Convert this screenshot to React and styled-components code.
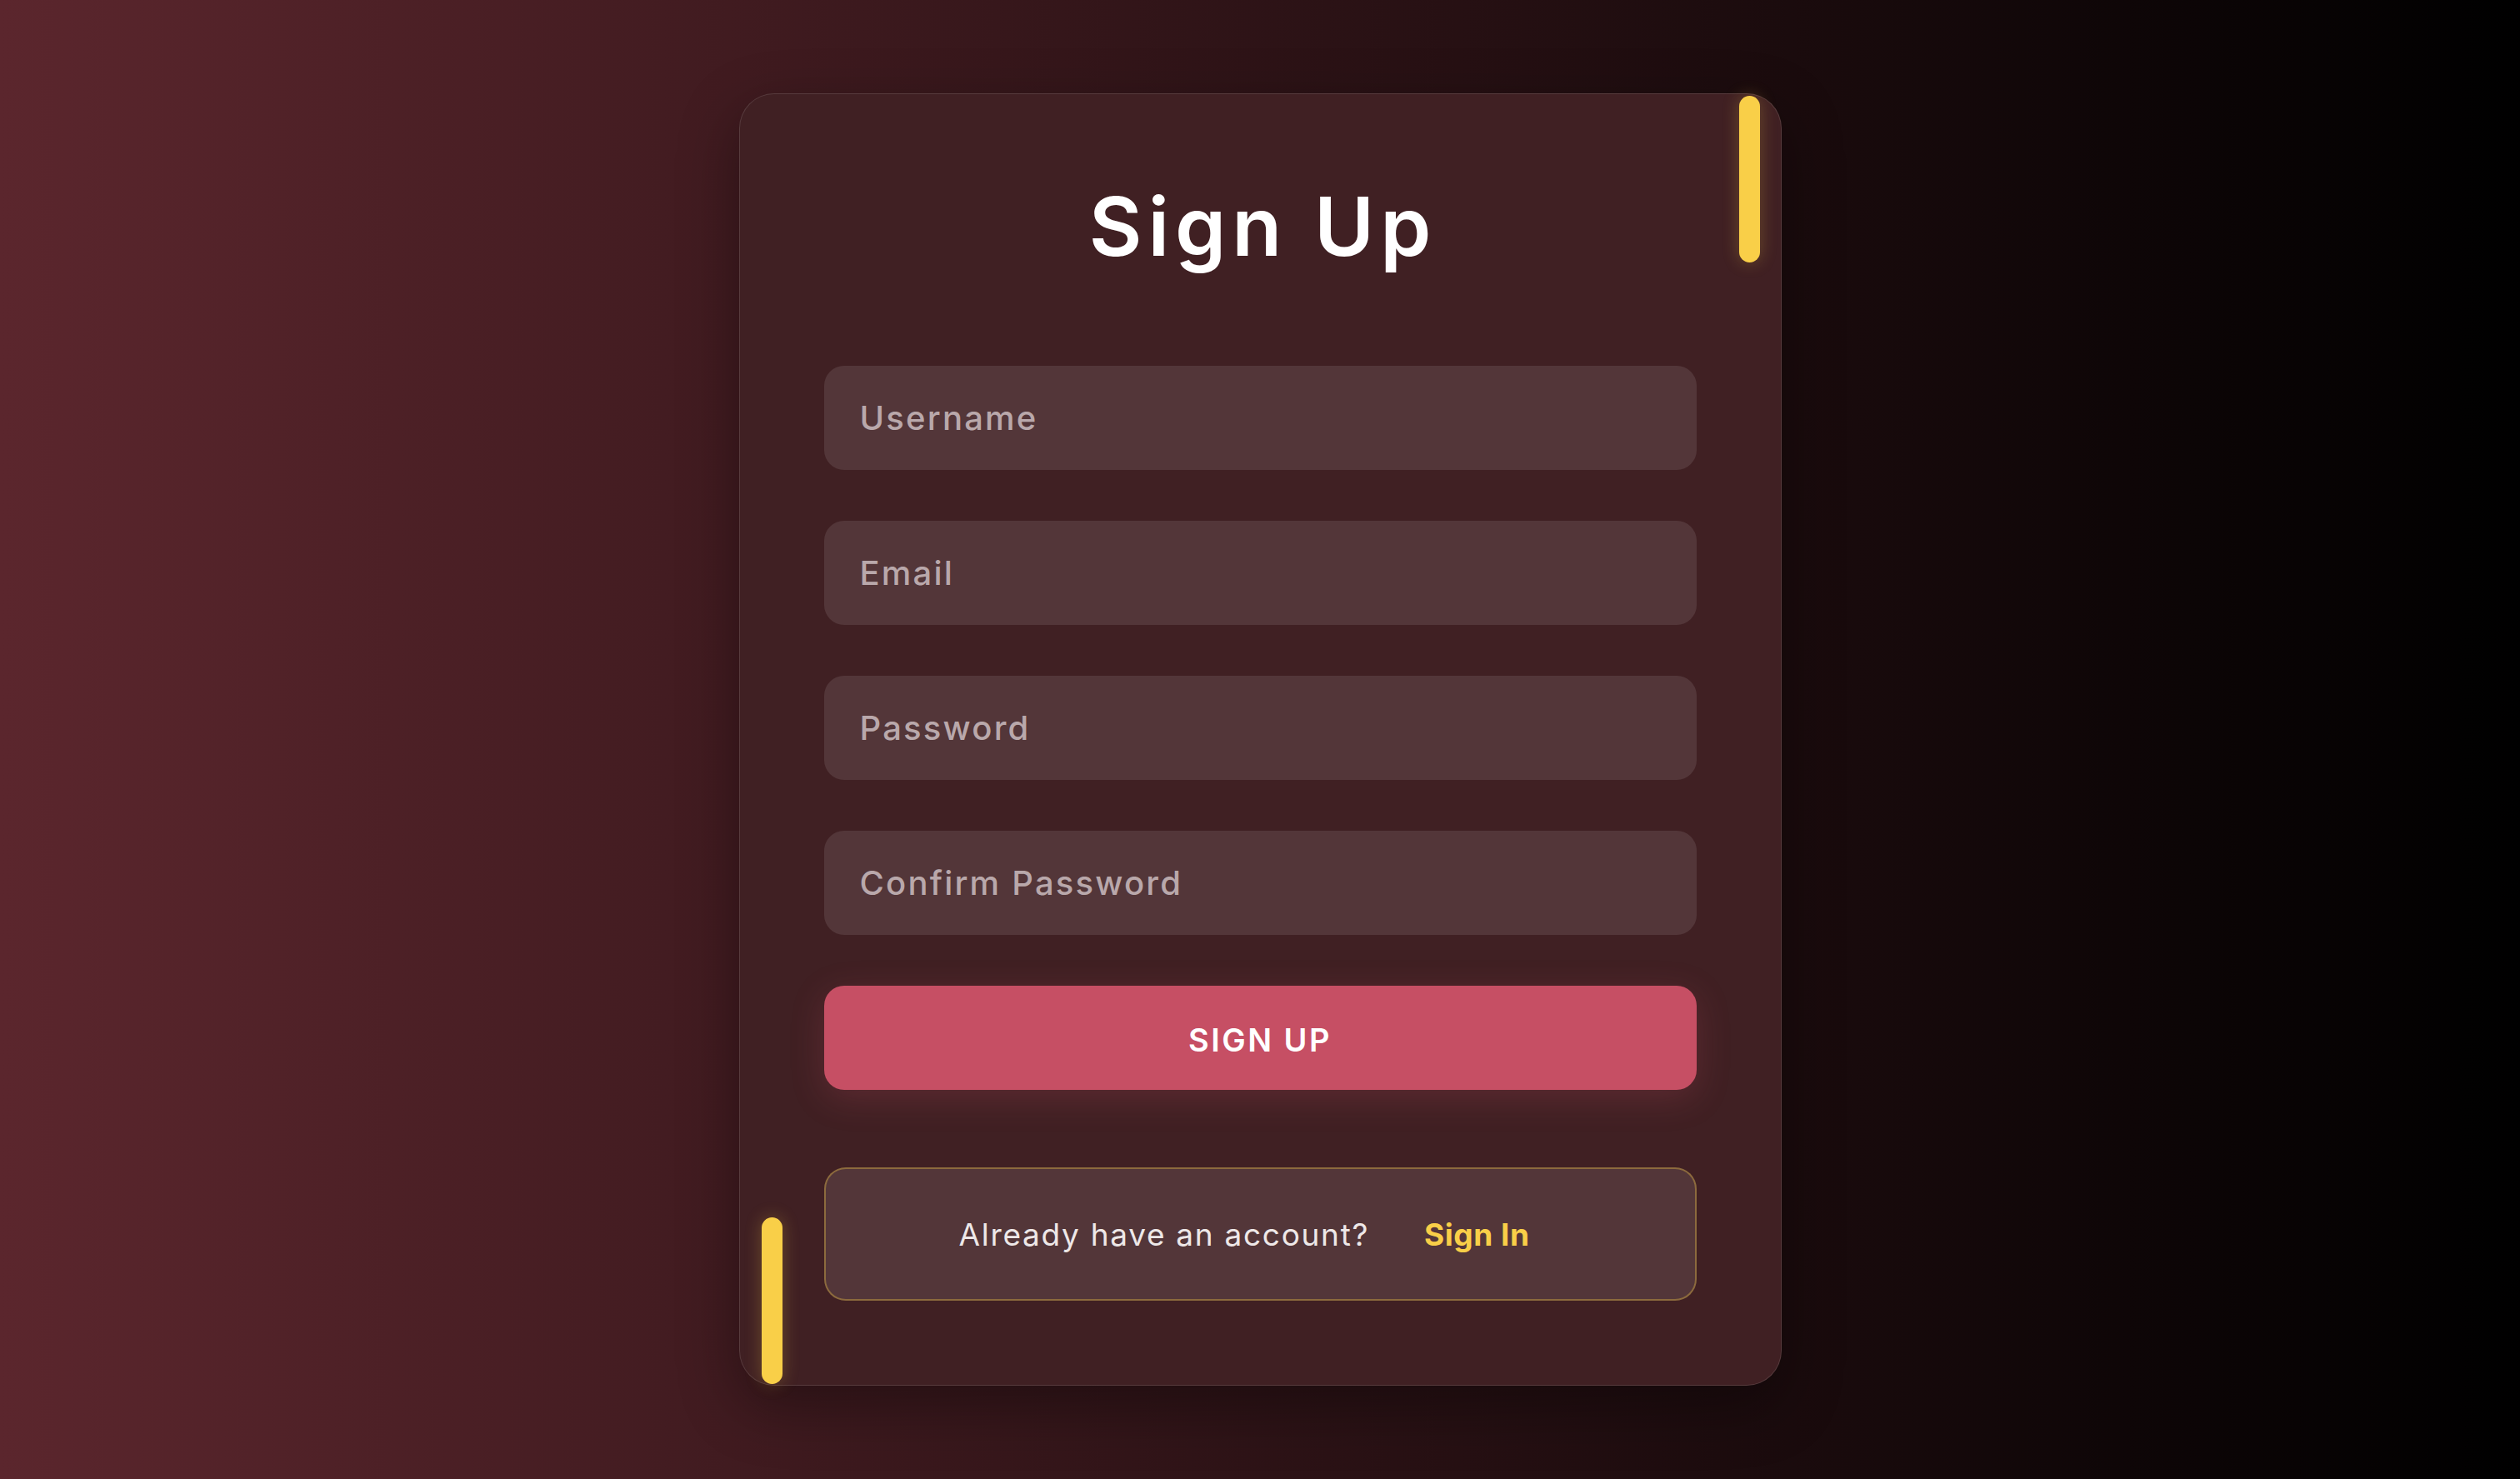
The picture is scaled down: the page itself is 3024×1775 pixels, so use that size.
import React from 'react';
import styled, { createGlobalStyle } from 'styled-components';

const GlobalStyle = createGlobalStyle`
  * {
    box-sizing: border-box;
  }
  html,
  body {
    margin: 0;
    padding: 0;
  }
  body {
    font-family: Inter, 'Noto Sans', 'Liberation Sans', sans-serif;
    background: linear-gradient(90deg, #5b262d 0%, #000 100%);
  }
`;

const FIELDS = ['Username', 'Email', 'Password', 'Confirm Password'];

const App = () => {
  return (
    <Page>
      <GlobalStyle />
      <Card>
        <Accent $corner="top" />
        <Title>Sign Up</Title>
        <Form onSubmit={(e) => e.preventDefault()}>
          {FIELDS.map((label) => (
            <Input
              key={label}
              type={label.includes('Password') ? 'password' : 'text'}
              placeholder={label}
            />
          ))}
          <SubmitButton type="submit">Sign Up</SubmitButton>
        </Form>
        <SwitchBox>
          <SwitchText>Already have an account?</SwitchText>
          <SwitchLink href="#">Sign In</SwitchLink>
        </SwitchBox>
        <Accent $corner="bottom" />
      </Card>
    </Page>
  );
};

const Page = styled.div`
  width: 100%;
  min-height: 100vh;
  display: flex;
  align-items: center;
  justify-content: center;
`;

const Card = styled.div`
  position: relative;
  width: 1251px;
  padding: 110px 101px 101px;
  background: #402023;
  border: 1px solid rgba(255, 255, 255, 0.12);
  border-radius: 42px;
  box-shadow: 0 24px 70px rgba(0, 0, 0, 0.35);
  display: flex;
  flex-direction: column;
`;

const Accent = styled.span`
  position: absolute;
  width: 25px;
  height: 200px;
  border-radius: 13px;
  background: #f9cf48;
  box-shadow: 0 0 20px rgba(249, 207, 72, 0.25);
  ${({ $corner }) =>
    $corner === 'top'
      ? 'top: 2px; right: 25px;'
      : 'bottom: 1px; left: 26px;'}
`;

const Title = styled.h1`
  margin: 0 0 118px;
  padding-left: 7px;
  font-size: 98px;
  line-height: 1;
  font-weight: 600;
  letter-spacing: 7px;
  color: #fff;
  text-align: center;
`;

const Form = styled.form`
  display: flex;
  flex-direction: column;
  gap: 61px;
`;

const Input = styled.input`
  height: 125px;
  padding: 0 43px;
  border: none;
  border-radius: 24px;
  background: rgba(255, 255, 255, 0.1);
  font-family: inherit;
  font-size: 40px;
  font-weight: 500;
  letter-spacing: 2.2px;
  color: #fff;
  outline: none;

  &::placeholder {
    color: #b9a8ab;
  }
`;

const SubmitButton = styled.button`
  height: 125px;
  padding: 4px 0 0;
  border: none;
  border-radius: 24px;
  background: #c64f64;
  box-shadow: 0 10px 40px rgba(198, 79, 100, 0.22);
  font-family: inherit;
  font-size: 38px;
  font-weight: 600;
  letter-spacing: 2.5px;
  text-transform: uppercase;
  color: #fff;
  cursor: pointer;
`;

const SwitchBox = styled.div`
  margin-top: 93px;
  height: 160px;
  border: 2px solid rgba(249, 207, 72, 0.35);
  border-radius: 26px;
  background: rgba(255, 255, 255, 0.1);
  display: flex;
  align-items: center;
  justify-content: center;
  gap: 66px;
  padding-right: 38px;
`;

const SwitchText = styled.span`
  font-size: 37px;
  font-weight: 400;
  letter-spacing: 1.7px;
  color: #eee8e8;
`;

const SwitchLink = styled.a`
  font-size: 37px;
  font-weight: 700;
  letter-spacing: 0.5px;
  color: #f9cf48;
  text-decoration: none;
`;

export default App;
